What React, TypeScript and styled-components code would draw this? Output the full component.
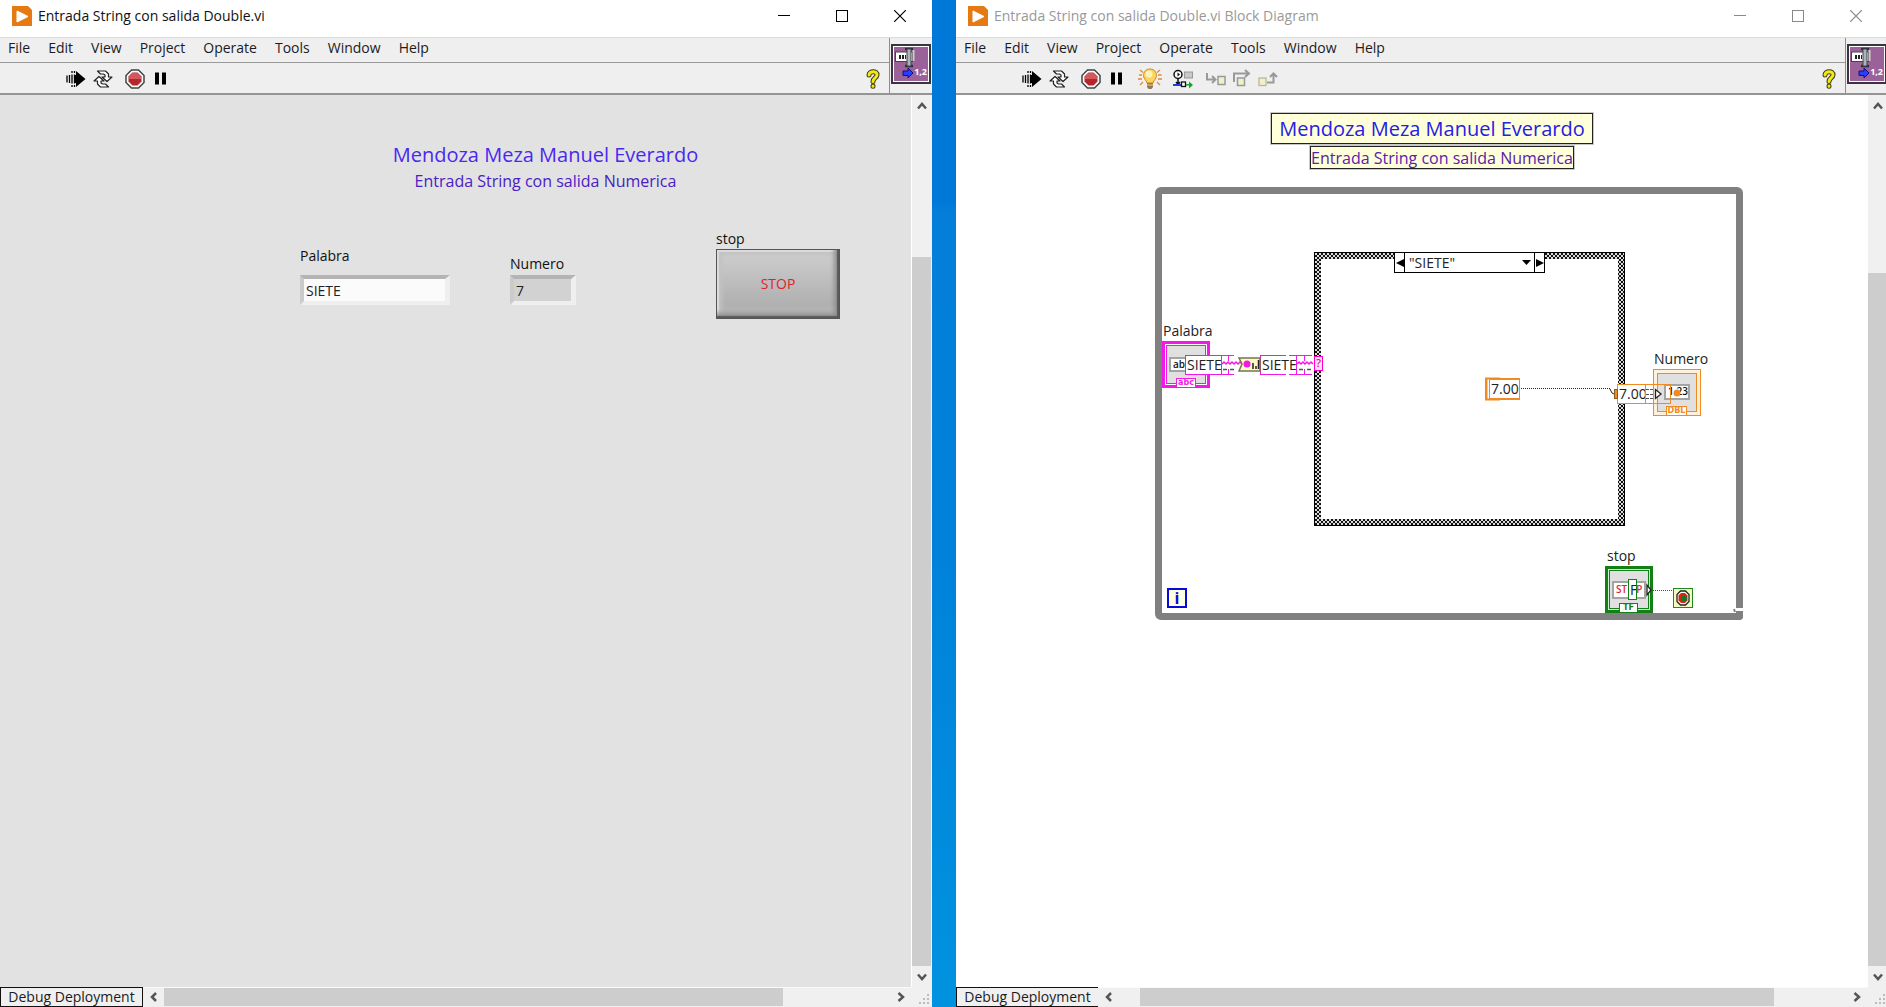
import React from "react";
import styled, { createGlobalStyle, css } from "styled-components";

const GlobalStyle = createGlobalStyle`
  *, *::before, *::after { box-sizing: border-box; }
  html, body { margin: 0; height: 100%; overflow: hidden; }
  body, button, input, select { font-family: "Open Sans", "Noto Sans", sans-serif; }
  button { border: 0; padding: 0; background: none; color: inherit; }
  svg { display: block; }
`;

/* ---------- window frame ---------- */

const Desktop = styled.main`
  display: grid;
  grid-template-columns: minmax(0, 932fr) minmax(0, 954fr);
  height: 100vh;
  overflow: hidden;
  background: linear-gradient(#0078d7 0, #0078d7 20%, #047ed9 21%, #0082da 55%, #0092e0 100%);
`;

const Frame = styled.section<{ $second?: boolean }>`
  display: flex;
  flex-direction: column;
  min-width: 0;
  height: 100vh;
  background: #fff;
  ${(p) => p.$second && css`margin: 0 -2px 0 24px;`}
`;

const TitleBar = styled.header<{ $inactive?: boolean }>`
  display: flex;
  align-items: center;
  height: 37px;
  flex: none;
  padding: 0 3px 5px 12px;
  background: #fff;
  color: ${(p) => (p.$inactive ? "#999" : "#111")};
`;

const TitleText = styled.h1`
  flex: 1;
  margin: 0 0 0 6px;
  font-size: 14px;
  line-height: 20px;
  font-weight: 400;
  white-space: nowrap;
`;

const CaptionButton = styled.button`
  display: grid;
  place-items: center;
  width: 58px;
  height: 32px;
`;

const Chrome = styled.div`
  display: grid;
  grid-template-columns: minmax(0, 1fr) 43px;
  height: 58px;
  flex: none;
  background: #efefef;
  border-top: 1px solid #dadada;
  border-bottom: 2px solid #949494;
`;

const Menu = styled.nav`
  display: flex;
  gap: 18px;
  height: 25px;
  padding-left: 8px;
  border-bottom: 1px solid #9a9a9a;
`;

const MenuItem = styled.button`
  font-size: 14px;
  line-height: 20px;
  color: #1b1b24;
  padding-bottom: 4px;
`;

const Toolbar = styled.div`
  display: flex;
  align-items: center;
  height: 30px;
  padding: 2px 9px 0 66px;
`;

const ToolButton = styled.button<{ $gap?: number; $end?: boolean }>`
  margin-left: ${(p) => (p.$end ? "auto" : `${p.$gap ?? 0}px`)};
`;

const IconPane = styled.div`
  display: grid;
  justify-content: end;
  align-content: start;
  padding: 6px 1px 0 0;
  border-left: 1px solid #8c8c8c;
`;

const ViIcon = styled.div`
  position: relative;
  width: 40px;
  height: 40px;
  border: 2px solid #3b3440;
  outline: 1px solid #fff;
  outline-offset: -3px;
  background: #9a6299;
`;

const ViNumber = styled.span`
  position: absolute;
  right: 2px;
  bottom: 5px;
  color: #fff;
  font-size: 9px;
  line-height: 10px;
  font-weight: 700;
`;

/* ---------- scroll bars ---------- */

const Body = styled.div`
  display: grid;
  grid-template-columns: minmax(0, 1fr) 21px;
  flex: 1;
  min-height: 0;
`;

const VScroll = styled.div`
  display: flex;
  flex-direction: column;
  padding-right: 1px;
  background: #f0f0f0;
  border-left: 1px solid #fff;
`;

const Track = styled.div<{ $parts: string; $vertical?: boolean }>`
  display: grid;
  flex: 1;
  ${(p) => (p.$vertical ? "grid-template-rows" : "grid-template-columns")}: ${(p) => p.$parts};
`;

const Thumb = styled.div<{ $vertical?: boolean }>`
  background: #cdcdcd;
  ${(p) => (p.$vertical ? "grid-row: 2;" : "grid-column: 2;")}
`;

const ArrowButton = styled.button<{ $vertical?: boolean }>`
  display: grid;
  place-items: center;
  flex: none;
  width: ${(p) => (p.$vertical ? 19 : 21)}px;
  height: ${(p) => (p.$vertical ? 21 : 18)}px;
`;

const StatusBar = styled.footer`
  display: flex;
  flex: none;
  height: 20px;
  background: #f0f0f0;
`;

const HScroll = styled.div`
  display: flex;
  flex: 1;
  height: 19px;
  border-top: 1px solid #fafafa;
`;

const DeployButton = styled.button<{ $open?: boolean }>`
  flex: none;
  width: ${(p) => (p.$open ? 142 : 143)}px;
  border: 1px solid #111;
  ${(p) => p.$open && css`border-right: 0;`}
  background: #f0f0f0;
  color: #1b1b24;
  font-size: 14px;
  line-height: 18px;
  white-space: nowrap;
`;

/* ---------- front panel ---------- */

const FrontPanel = styled.div`
  padding: 45px 0 0 300px;
  background: #e2e2e2;
  color: #111;
  min-width: 0;
  overflow: hidden;
`;

const Headings = styled.div`
  display: flex;
  flex-direction: column;
  align-items: center;
  width: 491px;
`;

const Heading = styled.h2`
  margin: 0;
  font-size: 20px;
  line-height: 30px;
  font-weight: 400;
  color: #4a28f0;
  white-space: nowrap;
`;

const SubHeading = styled.p`
  margin: 0;
  font-size: 16px;
  line-height: 22px;
  color: #4a20c4;
  white-space: nowrap;
`;

const Controls = styled.div`
  display: flex;
  align-items: flex-end;
  margin-top: 38px;
`;

const Field = styled.div<{ $gap: number; $after?: number; $lift?: number }>`
  display: flex;
  flex-direction: column;
  gap: ${(p) => p.$gap}px;
  margin: 0 ${(p) => p.$after ?? 0}px ${(p) => p.$lift ?? 0}px 0;
`;

const Label = styled.label`
  font-size: 14px;
  line-height: 18px;
`;

const Box = styled.input<{ $width: number; $readout?: boolean }>`
  width: ${(p) => p.$width}px;
  height: 30px;
  padding: 0 2px;
  border-style: solid;
  border-width: 4px 5px 4px 4px;
  border-color: #b4b4b4 #efefef #efefef #cbcbcb;
  background: ${(p) => (p.$readout ? "#d2d2d2" : "#fbfbfb")};
  color: #222;
  font-size: 14px;
  line-height: 20px;
  outline: 0;
`;

const StopButton = styled.button`
  width: 124px;
  height: 70px;
  border: 1px solid #555;
  background: linear-gradient(#cfcfcf, #b0b0b0 80%, #bcbcbc);
  box-shadow: inset -2px -2px 1px #5a5a5a, inset -5px -5px 4px #909090, inset 2px 2px 1px #dcdcdc,
    inset 5px 5px 4px #c2c2c2;
  color: #e3202a;
  font-size: 14px;
  line-height: 20px;
`;

/* ---------- block diagram: nodes live on a free canvas ---------- */

const Canvas = styled.div`
  position: relative;
  overflow: hidden;
  background: #fff;
`;

const Node = styled.div<{ $x: number; $y: number }>`
  position: absolute;
  left: ${(p) => p.$x}px;
  top: ${(p) => p.$y}px;
`;

const Comment = styled(Node)<{ $large?: boolean }>`
  display: grid;
  place-items: center;
  width: ${(p) => (p.$large ? 322 : 264)}px;
  height: ${(p) => (p.$large ? 31 : 23)}px;
  border: 1px solid #222;
  outline: 1px solid #7776;
  background: #ffffd9;
  color: ${(p) => (p.$large ? "#2420e6" : "#5a20b0")};
  font-size: ${(p) => (p.$large ? 20 : 16)}px;
  line-height: 20px;
  white-space: nowrap;
`;

const WhileLoop = styled(Node)`
  width: 588px;
  height: 433px;
  border: 7px solid #808080;
  border-radius: 6px 6px 0 6px;
`;

const CaseStructure = styled(Node)`
  width: 311px;
  height: 274px;
  padding: 6px;
  border: 1px solid #000;
  background: repeating-conic-gradient(#111 0 25%, #ddd 0 50%) 0 0 / 4px 4px;
`;

const CaseInside = styled.div`
  height: 100%;
  background: #fff;
`;

const CaseSelector = styled(Node)`
  display: grid;
  grid-template-columns: 9px 1fr 9px;
  width: 151px;
  height: 21px;
  border: 1px solid #000;
  background: #fff;
`;

const CaseStep = styled.button`
  display: grid;
  place-items: center;
`;

const CaseChoice = styled.div`
  display: grid;
  align-items: center;
  border: solid #000;
  border-width: 0 1px;
  > * { grid-area: 1 / 1; }
  > svg { justify-self: end; margin-right: 3px; pointer-events: none; }
`;

const CaseSelect = styled.select`
  appearance: none;
  width: 100%;
  height: 19px;
  padding: 0 4px;
  border: 0;
  background: #fff;
  color: #222;
  font-size: 14px;
  line-height: 18px;
`;

const Caption = styled(Node)`
  font-size: 14px;
  line-height: 18px;
  color: #222;
`;

const Terminal = styled(Node)<{ $color: string; $tint: string; $border: number }>`
  width: 48px;
  height: 47px;
  padding: ${(p) => (p.$border > 1 ? 1 : 3)}px;
  border: ${(p) => p.$border}px solid ${(p) => p.$color};
  background: ${(p) => p.$tint};
`;

const TerminalFace = styled.div<{ $color: string }>`
  height: 100%;
  border: 1px solid ${(p) => p.$color};
  background: #e0e0e0;
`;

const Glyph = styled(Node)<{ $w: number; $h: number; $color?: string }>`
  display: flex;
  gap: 9px;
  width: ${(p) => p.$w}px;
  height: ${(p) => p.$h}px;
  border: 2px solid #a4a4a4;
  background: #fff;
  color: ${(p) => p.$color ?? "#111"};
  font-size: 10px;
  line-height: ${(p) => p.$h - 5}px;
  font-weight: 600;
  padding-left: 2px;
  overflow: hidden;
`;

const TypeTag = styled(Node)<{ $w: number; $color: string }>`
  width: ${(p) => p.$w}px;
  height: 9px;
  border: 1px solid ${(p) => p.$color};
  border-bottom: 0;
  background: #fff;
  color: ${(p) => p.$color};
  font-family: "DejaVu Sans", sans-serif;
  font-size: 8px;
  line-height: 8px;
  font-weight: 700;
  text-align: center;
`;

const Probe = styled(Node)<{ $w: number; $h: number; $color: string; $clear?: boolean }>`
  width: ${(p) => p.$w}px;
  height: ${(p) => p.$h}px;
  padding-left: 1px;
  border: 1px solid ${(p) => p.$color};
  background: ${(p) => (p.$clear ? "transparent" : "#fff")};
  color: #222;
  font-size: 14px;
  line-height: ${(p) => p.$h - 2}px;
  white-space: nowrap;
  overflow: hidden;
`;

const SelectorTunnel = styled(Node)`
  width: 9px;
  height: 15px;
  border: 1px solid #f0c;
  background: #ffe3f8;
  color: #e010b0;
  font-size: 11px;
  line-height: 12px;
  font-weight: 600;
  text-align: center;
`;

const Iteration = styled(Node)`
  width: 20px;
  height: 20px;
  border: 2px solid #0a0ad8;
  background: #ffffe4;
  color: #0a0ad8;
  font-size: 16px;
  line-height: 16px;
  font-weight: 700;
  text-align: center;
`;

const StopCondition = styled(Node)`
  display: grid;
  place-items: center;
  width: 20px;
  height: 20px;
  border: 1px solid #1c8a1c;
  background: #f4f9c0;
`;

const Wires = styled.svg`
  position: absolute;
  left: 0;
  top: 0;
  pointer-events: none;
`;

/* ---------- drawings ---------- */

const AppLogo = () => (
  <svg width="20" height="20" viewBox="0 0 20 20" aria-hidden="true">
    <path d="M0 0H16L20 4V20H0Z" fill="#e67a12" />
    <path d="M5 5L16 10.5L5 16Z" fill="#fff" stroke="#fff" strokeLinejoin="round" />
  </svg>
);

const RunIcon = () => (
  <svg width="20" height="20" viewBox="0 0 20 20" aria-hidden="true">
    <path d="M10 6V2L19.5 10L10 18V14H9V6Z" fill="#000" />
    <path d="M1 6.500V13.500M3.500 6V14M6 2V4M6 5.500V14.500M6 16V18M8.500 2V4M8.500 5.500V14.500M8.500 16V18" stroke="#000" strokeWidth="1.300" />
  </svg>
);

const LoopRunIcon = () => (
  <svg width="20" height="20" viewBox="0 0 20 20" aria-hidden="true" fill="#fff" stroke="#222" strokeWidth="1.200" strokeLinejoin="round">
    <path d="M4.500 2H12.500L15.500 5V8H19L14 12.500L9 8H12V6L10.500 5H7.500Z" />
    <path d="M15.500 18H7.500L4.500 15V12H1L6 7.500L11 12H8V14L9.500 15H12.500Z" />
  </svg>
);

const AbortIcon = () => (
  <svg width="20" height="20" viewBox="0 0 20 20" aria-hidden="true">
    <path d="M6.500 1H13.500L19 6.500V13.500L13.500 19H6.500L1 13.500V6.500Z" fill="#fbfbfb" stroke="#444" strokeWidth="1.500" />
    <path d="M7.500 3.500H12.500L16.500 7.500V12.500L12.500 16.500H7.500L3.500 12.500V7.500Z" fill="#b3262e" />
    <path d="M7.500 4H12.500L16 7.500V10H4V7.500Z" fill="#d4575c" />
  </svg>
);

const PauseIcon = () => (
  <svg width="14" height="20" viewBox="0 0 14 20" aria-hidden="true">
    <path d="M1 3.500H5V15.500H1ZM8 3.500H12V15.500H8Z" fill="#000" />
  </svg>
);

const BulbIcon = () => (
  <svg width="24" height="22" viewBox="0 0 24 22" aria-hidden="true">
    <path d="M2 2L5 4.500M1 7H4M0 11H4M2 17L5 14M22 2L19 4.500M20 7H23.500M20 11H24M22 17L19 14" stroke="#e08a3c" strokeWidth="1.400" />
    <path d="M12 1C7.500 1 5.500 4.500 5.500 7.500C5.500 11 8.500 12 9 15H15C15.500 12 18.500 11 18.500 7.500C18.500 4.500 16.500 1 12 1Z" fill="#ffd45a" stroke="#c98a28" />
    <ellipse cx="11" cy="6" rx="3.500" ry="3.500" fill="#fff3bd" />
    <path d="M9 15H15V19L13.500 21H10.500L9 19Z" fill="#98784c" />
    <path d="M9 17H15" stroke="#e3cfa0" />
  </svg>
);

const RetainIcon = () => (
  <svg width="21" height="20" viewBox="0 0 21 20" aria-hidden="true">
    <circle cx="5" cy="5.500" r="4" fill="#fff" stroke="#111" strokeWidth="1.500" />
    <path d="M4.500 3.500L7 5.500L4.500 7.500Z" fill="#111" />
    <path d="M5 10V15M3 13L5 15.500L7 13" stroke="#111" strokeWidth="1.500" fill="none" />
    <rect x="11.500" y="3" width="8" height="6" fill="#c8c8c8" stroke="#999" />
    <path d="M0 16H8" stroke="#2040e0" strokeWidth="2" />
    <rect x="8.500" y="13" width="4" height="4.500" fill="#fff" stroke="#111" strokeWidth="1.300" />
    <path d="M13 15H16V12.500L20 16L16 19.500V16.500H13Z" fill="#16a52a" />
  </svg>
);

const StepIntoIcon = () => (
  <svg width="20" height="20" viewBox="0 0 20 20" aria-hidden="true">
    <path d="M1 4V10.500H9M6 7L9.500 10.500L6 14" stroke="#999" strokeWidth="2" fill="none" />
    <rect x="12" y="7.500" width="7" height="8" fill="#f1f1c8" stroke="#999" strokeWidth="1.500" />
  </svg>
);

const StepOverIcon = () => (
  <svg width="20" height="20" viewBox="0 0 20 20" aria-hidden="true">
    <path d="M2 13V4.500H16M13 1L17 4.500L13 8" stroke="#999" strokeWidth="2" fill="none" />
    <rect x="5.500" y="9" width="7" height="7.500" fill="#f1f1c8" stroke="#999" strokeWidth="1.500" />
  </svg>
);

const StepOutIcon = () => (
  <svg width="20" height="20" viewBox="0 0 20 20" aria-hidden="true">
    <rect x="1" y="9" width="7" height="7.500" fill="#f1f1c8" stroke="#bbb6a0" strokeWidth="1.300" />
    <path d="M9 13.500H15.500V5M12 8L15.500 4.500L19 8" stroke="#999" strokeWidth="2" fill="none" />
  </svg>
);

const HelpIcon = () => (
  <svg width="14" height="20" viewBox="0 0 14 20" aria-hidden="true" fill="none" strokeLinecap="round">
    <path d="M3 6C3 1.500 11.500 1.500 11 6C10.800 8.800 7 9.200 7 12.500M7 17V17.200" stroke="#3d3a10" strokeWidth="5" />
    <path d="M3 6C3 1.500 11.500 1.500 11 6C10.800 8.800 7 9.200 7 12.500M7 17V17.200" stroke="#f3ea10" strokeWidth="3" />
  </svg>
);

const ConnectorIcon = () => (
  <ViIcon>
    <svg width="36" height="36" viewBox="0 0 36 36" aria-hidden="true">
      <rect x="2.500" y="6" width="17" height="9.500" fill="#fff" stroke="#444" />
      <path d="M6 11H13" stroke="#222" strokeWidth="4" strokeDasharray="2 1" />
      <path d="M12 3H20M12 20H20" stroke="#2c2c3c" strokeWidth="2.500" />
      <rect x="14" y="3" width="4" height="17" fill="#aab4bc" stroke="#444" />
      <path d="M20.500 4V15" stroke="#ccc" strokeWidth="2" />
      <path d="M10 25H15V22L20 27L15 32V29.500H10Z" fill="#2a3cff" stroke="#101080" />
    </svg>
    <ViNumber>1,2</ViNumber>
  </ViIcon>
);

const Chevron = ({ d }: { d: string }) => (
  <svg width="10" height="10" viewBox="0 0 10 10" aria-hidden="true">
    <path d={d} fill="none" stroke="#555" strokeWidth="2.500" />
  </svg>
);

const UP = "M1 7.500L5 3L9 7.500";
const DOWN = "M1 2.500L5 7L9 2.500";
const LEFT = "M7 1L3 5L7 9";
const RIGHT = "M2.500 1L7 5L2.500 9";

const Grip = styled.div`
  display: grid;
  flex: none;
  place-items: end;
  width: 21px;
  padding: 0 3px 3px 0;
`;

const GripIcon = () => (
  <svg width="10" height="10" viewBox="0 0 10 10" fill="#bbb" aria-hidden="true">
    <path d="M8 0h2v2H8zM4 4h2v2H4zM8 4h2v2H8zM0 8h2v2H0zM4 8h2v2H4zM8 8h2v2H8z" />
  </svg>
);

/* ---------- assembled window ---------- */

const MENU = ["File", "Edit", "View", "Project", "Operate", "Tools", "Window", "Help"];

interface WindowProps {
  title: string;
  second?: boolean;
  tools?: React.ReactNode;
  vertical: string;
  horizontal: string;
  children: React.ReactNode;
}

function LabWindow({ title, second, tools, vertical, horizontal, children }: WindowProps) {
  const ink = second ? "#888" : "#000";
  return (
    <Frame $second={second}>
      <TitleBar $inactive={second}>
        <AppLogo />
        <TitleText>{title}</TitleText>
        <CaptionButton aria-label="Minimize">
          <svg width="12" height="12"><path d="M0 5.500H12" stroke={ink} /></svg>
        </CaptionButton>
        <CaptionButton aria-label="Maximize">
          <svg width="12" height="12"><rect x="0.500" y="0.500" width="11" height="11" fill="none" stroke={ink} /></svg>
        </CaptionButton>
        <CaptionButton aria-label="Close">
          <svg width="12" height="12"><path d="M0 0L12 12M12 0L0 12" stroke={ink} strokeWidth="1.200" /></svg>
        </CaptionButton>
      </TitleBar>
      <Chrome>
        <div>
          <Menu>{MENU.map((m) => <MenuItem key={m}>{m}</MenuItem>)}</Menu>
          <Toolbar>
            <ToolButton aria-label="Run"><RunIcon /></ToolButton>
            <ToolButton $gap={7} aria-label="Run continuously"><LoopRunIcon /></ToolButton>
            <ToolButton $gap={12} aria-label="Abort"><AbortIcon /></ToolButton>
            <ToolButton $gap={9} aria-label="Pause"><PauseIcon /></ToolButton>
            {tools}
            <ToolButton $end aria-label="Help"><HelpIcon /></ToolButton>
          </Toolbar>
        </div>
        <IconPane><ConnectorIcon /></IconPane>
      </Chrome>
      <Body>
        {children}
        <VScroll>
          <ArrowButton $vertical aria-label="Scroll up"><Chevron d={UP} /></ArrowButton>
          <Track $vertical $parts={vertical}><Thumb $vertical /></Track>
          <ArrowButton $vertical aria-label="Scroll down"><Chevron d={DOWN} /></ArrowButton>
        </VScroll>
      </Body>
      <StatusBar>
        <DeployButton $open={second}>Debug Deployment</DeployButton>
        <HScroll>
          <ArrowButton aria-label="Scroll left"><Chevron d={LEFT} /></ArrowButton>
          <Track $parts={horizontal}><Thumb /></Track>
          <ArrowButton aria-label="Scroll right"><Chevron d={RIGHT} /></ArrowButton>
        </HScroll>
        <Grip><GripIcon /></Grip>
      </StatusBar>
    </Frame>
  );
}

const PINK = "#f218e6";
const ORANGE = "#f28a24";
const GREEN = "#128016";

function BlockDiagram() {
  return (
    <Canvas>
      <Comment $large $x={315} $y={18}>Mendoza Meza Manuel Everardo</Comment>
      <Comment $x={354} $y={51}>Entrada String con salida Numerica</Comment>

      <WhileLoop $x={199} $y={92} />
      <CaseStructure $x={358} $y={157}><CaseInside /></CaseStructure>
      <CaseSelector $x={438} $y={157}>
        <CaseStep aria-label="Previous case">
          <svg width="8" height="8"><path d="M8 0V8L0 4Z" /></svg>
        </CaseStep>
        <CaseChoice>
          <CaseSelect aria-label="Case"><option>"SIETE"</option></CaseSelect>
          <svg width="9" height="5"><path d="M0 0H9L4.500 5Z" /></svg>
        </CaseChoice>
        <CaseStep aria-label="Next case">
          <svg width="8" height="8"><path d="M0 0V8L8 4Z" /></svg>
        </CaseStep>
      </CaseSelector>

      <Caption $x={207} $y={227}>Palabra</Caption>
      <Terminal $x={206} $y={246} $color={PINK} $tint="#fff" $border={3}><TerminalFace $color={PINK} /></Terminal>
      <Glyph $x={213} $y={262} $w={18} $h={15}>ab</Glyph>
      <TypeTag $x={220} $y={283} $w={20} $color={PINK}>abc</TypeTag>

      <Caption $x={698} $y={255}>Numero</Caption>
      <Terminal $x={697} $y={274} $color={ORANGE} $tint="#fff0dc" $border={1}><TerminalFace $color={ORANGE} /></Terminal>
      <Glyph $x={708} $y={289} $w={26} $h={16}>1.23</Glyph>
      <TypeTag $x={710} $y={311} $w={21} $color={ORANGE}>DBL</TypeTag>

      <Caption $x={651} $y={452}>stop</Caption>
      <Terminal $x={649} $y={471} $color={GREEN} $tint="#d4f0d4" $border={3}><TerminalFace $color={GREEN} /></Terminal>
      <Glyph $x={656} $y={486} $w={34} $h={18} $color="#dd2a2a">
        <span>ST</span>
        <span>P</span>
      </Glyph>
      <TypeTag $x={663} $y={508} $w={19} $color={GREEN}>TF</TypeTag>

      <Probe $x={229} $y={260} $w={37} $h={20} $color={PINK}>SIETE</Probe>
      <Probe $x={304} $y={260} $w={37} $h={20} $color={PINK}>SIETE</Probe>
      <Probe $x={529} $y={283} $w={35} $h={22} $color={ORANGE} />
      <Probe $x={533} $y={284} $w={31} $h={20} $color={ORANGE}>7.00</Probe>
      <Probe $x={661} $y={289} $w={29} $h={20} $color={ORANGE}>7.00</Probe>
      <Probe $x={689} $y={289} $w={26} $h={20} $color={ORANGE} $clear />
      <Probe $x={672} $y={484} $w={9} $h={21} $color={GREEN}>F</Probe>

      <Wires width="800" height="560" aria-hidden="true" fill="none">
        {/* string wire, its coercion node and the value fragments on it */}
        <path d="M266 260.500H278M266 279.500H278M272.500 260V266M272.500 274V279" stroke={PINK} />
        <path d="M266 269l2 -2l2 2l2 -2l2 2l2 -2l2 2l2 -2l2 2l2 -2l2 2" stroke={PINK} strokeWidth="1.500" />
        <path d="M267 274.500h4M274 274.500h4" stroke="#555" strokeWidth="1.500" />
        <path d="M283 263H304V276H283L286 269Z" fill="#fdf9c8" stroke="#77744a" strokeWidth="1.500" />
        <path d="M297 274V268M300 274V271M302.500 265V274" stroke="#222" strokeWidth="1.500" />
        <circle cx="291" cy="269" r="3.500" fill={PINK} />
        <path d="M331.500 260V263M331.500 277V280" stroke="#fff" strokeWidth="3" />
        <path d="M341 260.500H356M341 279.500H356M348.500 260V266M348.500 274V279" stroke={PINK} />
        <path d="M341 269l2 -2l2 2l2 -2l2 2l2 -2l2 2l2 -2l2 2" stroke={PINK} strokeWidth="1.500" />
        <path d="M343 274.500h4M351 274.500h4" stroke="#555" strokeWidth="1.500" />
        {/* numeric wire through the output tunnel */}
        <path d="M530.500 283V305M529 283.500H544M529 304.500H544" stroke={ORANGE} strokeWidth="2" />
        <path d="M565 293.500H654" stroke="#222" strokeDasharray="1 1" />
        <path d="M654 294L656 298L658 299" stroke="#222" />
        <rect x="658.500" y="294.500" width="3" height="9" fill={ORANGE} stroke="#8a5a20" />
        <path d="M690 294.500H697M690 303.500H697M690 299.500H697" stroke="#555" strokeDasharray="3 1" />
        <path d="M699.500 294.500V303.500L705 299Z" fill="#fff" stroke="#222" strokeWidth="1.300" />
        <circle cx="721" cy="298" r="3.500" fill={ORANGE} />
        {/* boolean wire into the stop condition */}
        <path d="M691 490V500L695 495Z" fill="#fff" stroke="#222" strokeWidth="1.300" />
        <path d="M697 495.500H717" stroke={GREEN} strokeDasharray="1 1" />
        {/* notch at the resize corner of the loop */}
        <path d="M778 514.500H787" stroke="#fff" strokeWidth="3" />
        <path d="M778 514L779 517" stroke="#808080" strokeWidth="2" />
        <path d="M784 526L787 523V526Z" fill="#fff" />
      </Wires>

      <SelectorTunnel $x={358} $y={261}>?</SelectorTunnel>
      <Iteration $x={211} $y={493}>i</Iteration>
      <StopCondition $x={717} $y={493}>
        <svg width="14" height="16" viewBox="0 0 14 16" aria-hidden="true">
          <path d="M4.500 1H9.500L13 4.500V11.500L9.500 15H4.500L1 11.500V4.500Z" fill="#fff" stroke="#222" strokeWidth="1.300" />
          <path d="M5 3H9L11.500 5.500V10.500L9 13H5L2.500 10.500V5.500Z" fill="#dc2414" />
          <circle cx="8" cy="8.500" r="3" fill="#1a7a1a" />
        </svg>
      </StopCondition>
    </Canvas>
  );
}

export default function App() {
  return (
    <>
      <GlobalStyle />
      <Desktop>
        <LabWindow
          title="Entrada String con salida Double.vi"
          vertical="141fr 707fr 0fr"
          horizontal="0fr 619fr 107fr"
        >
          <FrontPanel>
            <Headings>
              <Heading>Mendoza Meza Manuel Everardo</Heading>
              <SubHeading>Entrada String con salida Numerica</SubHeading>
            </Headings>
            <Controls>
              <Field $gap={10} $after={60} $lift={14}>
                <Label htmlFor="palabra">Palabra</Label>
                <Box id="palabra" $width={150} defaultValue="SIETE" />
              </Field>
              <Field $gap={2} $after={140} $lift={14}>
                <Label htmlFor="numero">Numero</Label>
                <Box id="numero" $width={66} $readout readOnly value="7" />
              </Field>
              <Field $gap={1}>
                <Label htmlFor="stop">stop</Label>
                <StopButton id="stop">STOP</StopButton>
              </Field>
            </Controls>
          </FrontPanel>
        </LabWindow>

        <LabWindow
          second
          title="Entrada String con salida Double.vi Block Diagram"
          vertical="157fr 693fr 0fr"
          horizontal="21fr 635fr 72fr"
          tools={
            <>
              <ToolButton $gap={14} aria-label="Highlight execution"><BulbIcon /></ToolButton>
              <ToolButton $gap={11} aria-label="Retain wire values"><RetainIcon /></ToolButton>
              <ToolButton $gap={12} aria-label="Step into"><StepIntoIcon /></ToolButton>
              <ToolButton $gap={6} aria-label="Step over"><StepOverIcon /></ToolButton>
              <ToolButton $gap={6} aria-label="Step out"><StepOutIcon /></ToolButton>
            </>
          }
        >
          <BlockDiagram />
        </LabWindow>
      </Desktop>
    </>
  );
}
